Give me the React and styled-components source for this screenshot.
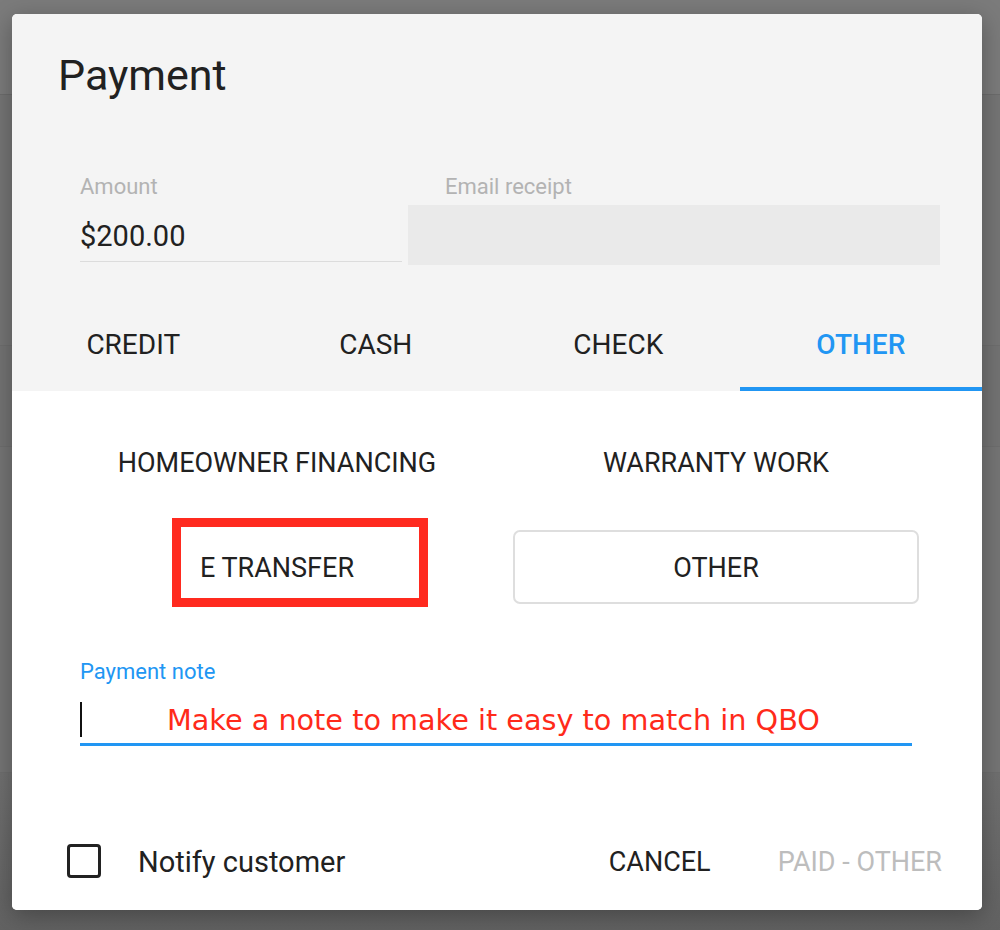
import React from 'react'
import styled, { createGlobalStyle } from 'styled-components'

const Global = createGlobalStyle`
  html, body {
    margin: 0;
    padding: 0;
  }
  body {
    font-family: Roboto, "Liberation Sans", Arial, sans-serif;
    color: #212121;
  }
`;

export default function App() {
  const tabs = ['CREDIT', 'CASH', 'CHECK', 'OTHER']
  const active = 'OTHER'

  return (
    <Page>
      <Global/>
      <Backdrop>
        <TopBar/>
        <Band h={250}/>
        <Band h={100} tone='#737373'/>
        <Band h={325}/>
        <Bottom/>
      </Backdrop>

      <Dialog>
        <Head>
          <Title>Payment</Title>
          <Fields>
            <Field>
              <Label>Amount</Label>
              <Value>$200.00</Value>
            </Field>
            <Field>
              <Label indent={37}>Email receipt</Label>
              <GreyBox/>
            </Field>
          </Fields>
          <Tabs>
            {tabs.map(t => (
              <Tab key={t} active={t === active}>{t}</Tab>
            ))}
          </Tabs>
        </Head>

        <Body>
          <Options>
            <Option>HOMEOWNER FINANCING</Option>
            <Option>WARRANTY WORK</Option>
            <Option>
              E TRANSFER
              <Highlight/>
            </Option>
            <Option selected>OTHER</Option>
          </Options>

          <Note>
            <Label color='#2196f3'>Payment note</Label>
            <NoteInput>
              <Caret/>
              <Annotation>Make a note to make it easy to match in QBO</Annotation>
            </NoteInput>
          </Note>

          <Footer>
            <Check/>
            <CheckLabel>Notify customer</CheckLabel>
            <Actions>
              <Action>CANCEL</Action>
              <Action disabled>PAID - OTHER</Action>
            </Actions>
          </Footer>
        </Body>
      </Dialog>
    </Page>
  )
}

const Page = styled.div`
  position: relative;
  width: 1000px;
  height: 930px;
  overflow: hidden;
  background: #747474;
`;

const Backdrop = styled.div`
  display: flex;
  flex-direction: column;
  height: 100%;
`;

const TopBar = styled.div`
  height: 94px;
  background: #7b7b7b;
  border-bottom: 1px solid #6c6c6c;
`;

const Band = styled.div`
  height: ${p => p.h}px;
  background: ${p => p.tone || '#757575'};
  border-bottom: 1px solid #6e6e6e;
`;

const Bottom = styled.div`
  flex: 1;
  background: linear-gradient(#707070, #626262);
`;

const Dialog = styled.div`
  position: absolute;
  left: 12px;
  top: 14px;
  width: 970px;
  height: 896px;
  border-radius: 5px;
  overflow: hidden;
  background: #fff;
  display: flex;
  flex-direction: column;
  box-shadow: 0 6px 24px rgba(0, 0, 0, 0.3);
`;

const Head = styled.div`
  background: #f4f4f4;
  display: flex;
  flex-direction: column;
`;

const Title = styled.h1`
  margin: 36px 0 0 46px;
  font-size: 43px;
  line-height: 50px;
  font-weight: 400;
  color: #212121;
`;

const Fields = styled.div`
  display: grid;
  grid-template-columns: 322px 1fr;
  gap: 6px;
  margin: 75px 42px 0 68px;
`;

const Field = styled.div`
  display: flex;
  flex-direction: column;
`;

const Label = styled.div`
  font-size: 22px;
  line-height: 24px;
  color: ${p => p.color || '#b3b3b3'};
  padding-left: ${p => p.indent || 0}px;
`;

const Value = styled.div`
  margin-top: 20px;
  font-size: 29px;
  line-height: 34px;
  padding-bottom: 8px;
  border-bottom: 1px solid #dcdcdc;
`;

const GreyBox = styled.div`
  margin-top: 6px;
  height: 60px;
  background: #eaeaea;
`;

const Tabs = styled.div`
  display: grid;
  grid-template-columns: repeat(4, 1fr);
  margin-top: 30px;
`;

const Tab = styled.div`
  height: 96px;
  box-sizing: border-box;
  display: flex;
  align-items: center;
  justify-content: center;
  padding-top: 7px;
  font-size: 28px;
  font-weight: ${p => (p.active ? 500 : 400)};
  color: ${p => (p.active ? '#2196f3' : '#212121')};
  border-bottom: 4px solid ${p => (p.active ? '#2196f3' : 'transparent')};
`;

const Body = styled.div`
  flex: 1;
  display: flex;
  flex-direction: column;
  background: #fff;
`;

const Options = styled.div`
  display: grid;
  grid-template-columns: 406px 406px;
  grid-auto-rows: 74px;
  column-gap: 33px;
  row-gap: 31px;
  margin: 34px 0 0 62px;
`;

const Option = styled.div`
  position: relative;
  display: flex;
  align-items: center;
  justify-content: center;
  box-sizing: border-box;
  padding-top: 2px;
  font-size: 27px;
  color: #212121;
  border: 2px solid ${p => (p.selected ? '#dedede' : 'transparent')};
  border-radius: 7px;
`;

const Highlight = styled.div`
  position: absolute;
  left: 96px;
  top: -14px;
  width: 256px;
  height: 89px;
  box-sizing: border-box;
  border: 9px solid #ff2a1f;
`;

const Note = styled.div`
  display: flex;
  flex-direction: column;
  margin: 56px 70px 0 68px;
`;

const NoteInput = styled.div`
  display: flex;
  align-items: center;
  height: 56px;
  padding-top: 6px;
  box-sizing: border-box;
  border-bottom: 3px solid #2196f3;
  margin-top: 6px;
`;

const Caret = styled.span`
  width: 2px;
  height: 35px;
  background: #111;
`;

const Annotation = styled.span`
  margin-left: 85px;
  font-family: "DejaVu Sans", Verdana, sans-serif;
  font-size: 28.7px;
  line-height: 34px;
  color: #ff2a1a;
`;

const Footer = styled.div`
  margin-top: auto;
  margin-bottom: 16px;
  height: 66px;
  display: flex;
  align-items: center;
  padding: 0 40px 0 55px;
`;

const Check = styled.div`
  width: 34px;
  height: 34px;
  box-sizing: border-box;
  border: 3.5px solid #222;
  border-radius: 4px;
`;

const CheckLabel = styled.span`
  margin-left: 37px;
  padding-top: 2px;
  font-size: 29px;
  color: #212121;
`;

const Actions = styled.div`
  margin-left: auto;
  padding-top: 2px;
  display: flex;
  gap: 67px;
`;

const Action = styled.span`
  font-size: 27px;
  color: ${p => (p.disabled ? '#bdbdbd' : '#212121')};
`;
